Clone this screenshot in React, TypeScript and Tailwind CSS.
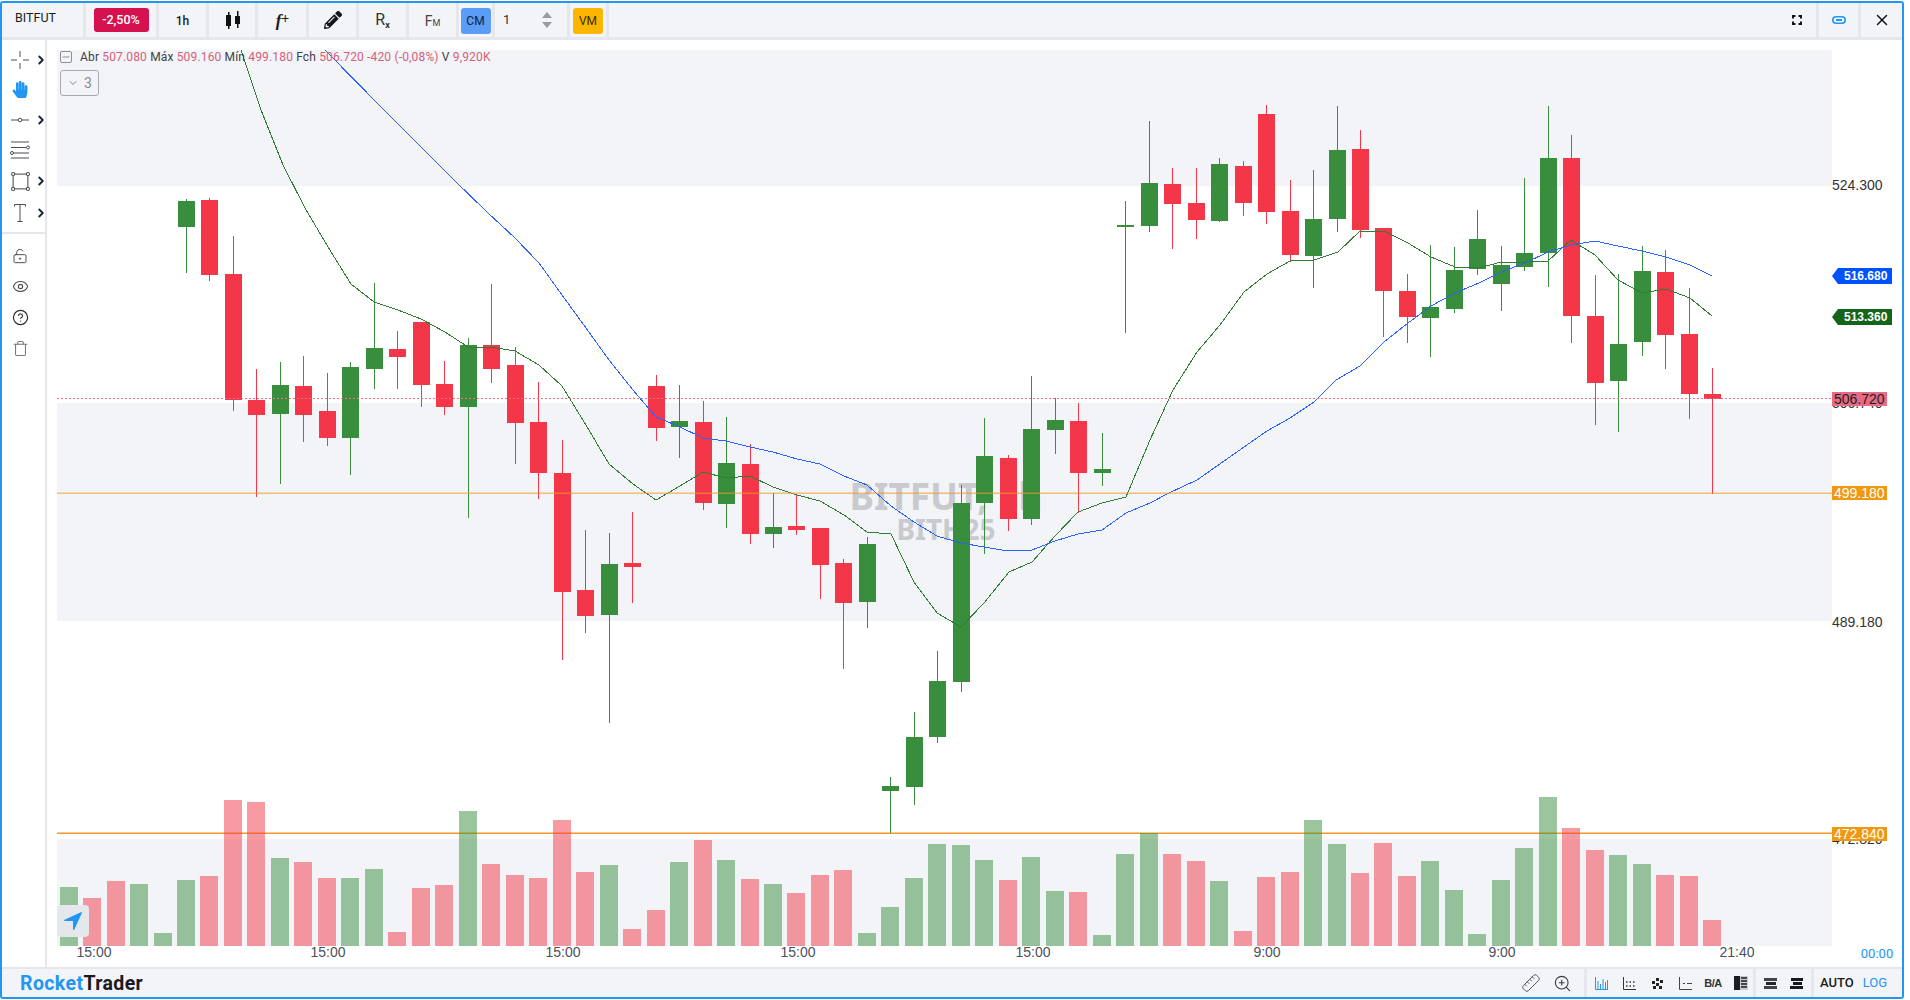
import { ChevronRight, ChevronDown, Ruler, ZoomIn, Eye, Trash, CircleHelp, LockKeyholeOpen, Minus, X } from "lucide-react";
import { FaHandPaper, FaPencilAlt } from "react-icons/fa";
import { IoNavigate } from "react-icons/io5";
import type { ReactNode } from "react";

// colour, wick top, body top, body bottom, wick bottom (candle index starts at 5)
const candles: [string, number, number, number, number][] = [
  ["g", 199, 201, 227, 273], ["r", 198, 200, 275, 281], ["r", 236, 274, 400, 411], ["r", 369, 400, 415, 497],
  ["g", 362, 385, 414, 484], ["r", 356, 386, 415, 442], ["r", 373, 411, 438, 446], ["g", 362, 367, 438, 475],
  ["g", 283, 348, 369, 389], ["r", 331, 349, 357, 389], ["r", 322, 322, 385, 407], ["r", 361, 384, 407, 415],
  ["g", 338, 345, 407, 518], ["r", 284, 345, 369, 383], ["r", 347, 365, 423, 464], ["r", 382, 422, 473, 499],
  ["r", 440, 473, 592, 660], ["r", 530, 590, 616, 633], ["g", 533, 564, 615, 723], ["r", 512, 563, 567, 603],
  ["r", 375, 386, 428, 441], ["g", 385, 421, 427, 458], ["r", 401, 422, 503, 510], ["g", 417, 463, 504, 528],
  ["r", 444, 464, 534, 544], ["g", 493, 527, 534, 548], ["r", 495, 526, 530, 535], ["r", 528, 528, 565, 599],
  ["r", 559, 563, 603, 669], ["g", 537, 544, 602, 628], ["g", 777, 786, 791, 833], ["g", 712, 737, 787, 805],
  ["g", 651, 681, 737, 743], ["g", 485, 503, 682, 692], ["g", 418, 456, 503, 554], ["r", 455, 458, 519, 531],
  ["g", 376, 429, 519, 525], ["g", 398, 420, 430, 454], ["r", 403, 421, 473, 513], ["g", 433, 469, 473, 486],
  ["g", 201, 225, 227, 333], ["g", 121, 183, 226, 232], ["r", 168, 184, 204, 249], ["r", 168, 203, 220, 239],
  ["g", 158, 164, 221, 222], ["r", 161, 166, 203, 216], ["r", 105, 114, 212, 224], ["r", 180, 211, 255, 262],
  ["g", 170, 219, 256, 288], ["g", 106, 150, 219, 232], ["r", 130, 149, 230, 238], ["r", 228, 228, 291, 337],
  ["r", 274, 291, 317, 343], ["g", 245, 307, 318, 357], ["g", 247, 270, 309, 313], ["g", 210, 239, 269, 275],
  ["g", 246, 265, 284, 311], ["g", 178, 253, 267, 271], ["g", 106, 158, 253, 287], ["r", 135, 158, 316, 343],
  ["r", 275, 316, 383, 425], ["g", 274, 344, 381, 432], ["g", 246, 271, 342, 356], ["r", 250, 272, 335, 369],
  ["r", 288, 334, 394, 419], ["r", 368, 394, 399, 494],
];

const volumes = [
  887, 898, 881, 884, 933, 880, 876, 800, 802, 858, 862, 878, 878, 869, 932, 888, 885, 811, 864, 875, 878, 820, 872, 865,
  929, 910, 862, 840, 860, 879, 884, 893, 875, 870, 933, 907, 878, 844, 845, 860, 880, 857, 891, 892, 935, 854, 833, 854,
  861, 881, 931, 877, 872, 820, 844, 873, 843, 876, 861, 890, 934, 880, 848, 797, 828, 850, 855, 864, 875, 876, 920,
];
const volColors = "grrgg" + candles.map((c) => c[0]).join("");

const greenLine =
  "241,50 261,110 283,165 305,208 328,247 351,284 374,302 398,310 421,319 445,332 468,347 491,347 515,351 539,365 562,386 586,425 609,464 633,484 656,500 680,486 703,472 726,478 750,476 773,487 797,495 820,501 844,515 867,532 891,534 914,582 937,613 961,627 984,603 1009,572 1032,562 1055,536 1078,512 1102,503 1126,497 1150,440 1173,390 1197,352 1220,325 1244,292 1267,274 1290,261 1314,260 1338,252 1360,231 1384,231 1408,243 1431,257 1455,267 1479,268 1501,262 1525,262 1548,261 1571,240 1595,255 1618,280 1642,293 1666,289 1690,298 1712,316";
const blueLine =
  "325,50 384,110 454,180 487,212 515,238 539,263 562,295 586,328 609,360 633,390 656,417 680,427 703,438 726,441 750,447 773,452 797,459 820,464 844,476 867,485 891,506 914,522 937,536 961,543 984,547 1008,551 1032,550 1055,541 1078,534 1102,530 1126,513 1150,503 1169,493 1197,480 1254,440 1267,431 1290,418 1314,402 1336,380 1360,366 1384,342 1408,323 1431,306 1455,293 1479,283 1501,272 1525,263 1548,252 1571,245 1595,241 1618,246 1642,251 1666,257 1690,265 1712,276";

const barX = (i: number) => Math.round(68.6 + 23.48 * i);

function Chart() {
  return (
    <svg viewBox="47 40 1855 927" className="absolute inset-0 w-full h-full">
      <rect x="57" y="50" width="1775" height="136" fill="#f2f4f8" />
      <rect x="57" y="403" width="1775" height="218" fill="#f2f4f8" />
      <rect x="57" y="839" width="1775" height="107" fill="#f2f4f8" />

      <text x="946" y="510" textAnchor="middle" className="font-[family-name:'Noto_Sans'] font-bold text-[37px] fill-[#c9cace]">BITFUT, 1h</text>
      <text x="946" y="540" textAnchor="middle" className="font-[family-name:'Noto_Sans'] font-bold text-[28px] fill-[#c9cace]">BITH25</text>

      <rect x="57" y="832.5" width="1775" height="1.5" fill="#f0982a" />

      {volumes.map((top, i) => (
        <rect key={i} x={barX(i) - 9} y={top} width="18" height={946 - top} fill={volColors[i] === "g" ? "#388e3c" : "#f23645"} fillOpacity="0.5" shapeRendering="crispEdges" />
      ))}

      {candles.map(([c, t, o, b, l], i) => {
        const x = barX(i + 5);
        const color = c === "g" ? "#388e3c" : "#f43748";
        return (
          <g key={i} fill={color} shapeRendering="crispEdges">
            <rect x={x} y={t} width="1" height={l - t} />
            <rect x={x - 8} y={o} width="17" height={b - o} />
          </g>
        );
      })}

      <polyline points={greenLine} fill="none" stroke="#2e7d32" strokeWidth="1" shapeRendering="crispEdges" />
      <polyline points={blueLine} fill="none" stroke="#2962ff" strokeWidth="1" shapeRendering="crispEdges" />

      <line x1="57" x2="1832" y1="398.5" y2="398.5" stroke="#f06d85" strokeWidth="1" strokeDasharray="2 2" />
      <rect x="57" y="492.5" width="1775" height="1.5" fill="#f0982a" fillOpacity="0.6" />

      <g className="font-[family-name:'Liberation_Sans'] text-[14px] fill-[#333]">
        <text x="1832" y="190">524.300</text>
        <text x="1832" y="408">506.740</text>
        <text x="1832" y="627">489.180</text>
        <text x="1832" y="844">472.820</text>
      </g>

      <polygon points="1832,276 1838,268 1892,268 1892,284 1838,284" fill="#0052ff" />
      <text x="1844" y="280" className="font-[family-name:'Liberation_Sans'] font-bold text-[12px] fill-white">516.680</text>
      <polygon points="1832,317 1838,309 1892,309 1892,325 1838,325" fill="#14641a" />
      <text x="1844" y="321" className="font-[family-name:'Liberation_Sans'] font-bold text-[12px] fill-white">513.360</text>

      <rect x="1832" y="392" width="55" height="14" fill="#e86a85" />
      <text x="1834" y="404" className="font-[family-name:'Liberation_Sans'] text-[14px] fill-[#222]">506.720</text>
      <rect x="1832" y="486" width="55" height="14" fill="#f0980f" />
      <text x="1834" y="498" className="font-[family-name:'Liberation_Sans'] text-[14px] fill-white">499.180</text>
      <rect x="1832" y="827" width="55" height="14" fill="#f0980f" />
      <text x="1834" y="839" className="font-[family-name:'Liberation_Sans'] text-[14px] fill-white">472.840</text>

      <g textAnchor="middle" className="font-[family-name:'Liberation_Sans'] text-[14px] fill-[#4d4f5c]">
        <text x="94" y="957">15:00</text>
        <text x="328" y="957">15:00</text>
        <text x="563" y="957">15:00</text>
        <text x="798" y="957">15:00</text>
        <text x="1033" y="957">15:00</text>
        <text x="1267" y="957">9:00</text>
        <text x="1502" y="957">9:00</text>
        <text x="1737" y="957">21:40</text>
      </g>
      <text x="1877" y="958" textAnchor="middle" className="font-[family-name:Roboto] text-[13px] fill-[#2196f3]">00:00</text>
    </svg>
  );
}

function Cell({ w, children, last }: { w: string; children?: ReactNode; last?: boolean }) {
  return (
    <div className={`${w} h-full flex items-center justify-center shrink-0 ${last ? "" : "border-r-[3px] border-[#e5e7ec]"}`}>
      {children}
    </div>
  );
}

function TopBar() {
  return (
    <div className="h-[37px] shrink-0 flex bg-[#f2f4f8] border-b-[3px] border-[#e5e7ec] text-[#1a1a1f]">
      <div className="w-[84px] h-full shrink-0 border-r-[3px] border-[#e5e7ec] flex items-center pl-[13px] pb-[3px] text-[12.5px]">BITFUT</div>
      <Cell w="w-[73px]">
        <span className="bg-[#d5124f] text-white rounded-[3px] w-[55px] h-[24px] flex items-center justify-center text-[12.5px] font-medium">-2,50%</span>
      </Cell>
      <Cell w="w-[50px]"><span className="text-[12px] font-medium mt-[1px]">1h</span></Cell>
      <Cell w="w-[49px]">
        <svg width="16" height="20" viewBox="0 0 16 20" fill="#111" className="ml-[1px]">
          <rect x="1" y="5" width="5" height="11" rx="0.5" />
          <rect x="3" y="2" width="1.5" height="17" />
          <rect x="10" y="6" width="5" height="8" rx="0.5" />
          <rect x="12" y="1" width="1.5" height="17" />
        </svg>
      </Cell>
      <Cell w="w-[51px]"><span className="font-[family-name:'Liberation_Serif'] italic font-bold text-[17px] leading-none ml-[1px]">f<span className="not-italic text-[14px] align-top">+</span></span></Cell>
      <Cell w="w-[50px]"><FaPencilAlt className="text-[#15161a] w-[18px] h-[18px]" /></Cell>
      <Cell w="w-[50px]"><span className="text-[16px] leading-none text-[#333] mt-[1px]">R<span className="text-[9px] font-bold align-[-3px]">x</span></span></Cell>
      <Cell w="w-[50px]"><span className="text-[14px] leading-none text-[#444] mt-[1px]">F<span className="text-[9px]">M</span></span></Cell>
      <Cell w="w-[36px]">
        <span className="bg-[#5b9cf6] rounded-[3px] w-[30px] h-[26px] mt-[1px] flex items-center justify-center text-[12px] text-[#10203a]">CM</span>
      </Cell>
      <div className="w-[75px] h-full shrink-0 border-r-[3px] border-[#e5e7ec] flex items-center justify-between pl-[8px] pr-[15px]">
        <span className="text-[13px] text-[#333]">1</span>
        <svg width="10" height="20" viewBox="0 0 10 20" fill="#9a9ca3">
          <polygon points="5,2 10,8 0,8" />
          <polygon points="0,12 10,12 5,18" />
        </svg>
      </div>
      <Cell w="w-[39px]">
        <span className="bg-[#fdb600] rounded-[3px] w-[30px] h-[26px] mt-[1px] flex items-center justify-center text-[12px] text-[#3a2a00]">VM</span>
      </Cell>
      <div className="flex-1" />
      <Cell w="w-[42px]">
        <svg width="10" height="10" viewBox="0 0 10 10" fill="none" stroke="#14161c" strokeWidth="2">
          <path d="M1 3.5V1h2.5M6.5 1H9v2.5M9 6.5V9H6.5M3.5 9H1V6.5" />
        </svg>
      </Cell>
      <Cell w="w-[42px]">
        <svg width="14" height="8" viewBox="0 0 14 8" fill="none" stroke="#2196f3" strokeWidth="1.6">
          <rect x="0.8" y="0.8" width="12.4" height="6.4" rx="3.2" />
          <path d="M4 4h6" strokeWidth="2" />
        </svg>
      </Cell>
      <Cell w="w-[41px]" last><X className="text-[#14161c] w-[18px] h-[18px]" strokeWidth={2} /></Cell>
    </div>
  );
}

function ToolRow({ h, chevron, children }: { h: string; chevron?: boolean; children: ReactNode }) {
  return (
    <div className={`${h} relative flex items-center justify-center w-full pr-[7px]`}>
      {children}
      {chevron && <ChevronRight className="absolute right-[-3px] w-[14px] h-[14px] text-[#1a2340]" strokeWidth={3.2} />}
    </div>
  );
}

function Sidebar() {
  return (
    <div className="w-[45px] shrink-0 h-full border-r-2 border-[#e5e7ec] pt-[5px] text-[#4a4d57]">
      <ToolRow h="h-[30px]" chevron>
        <svg width="18" height="18" viewBox="0 0 18 18" stroke="#4a4d57" strokeWidth="1"><path d="M0 9h6M12 9h6M9 0v6M9 12v6" /></svg>
      </ToolRow>
      <ToolRow h="h-[30px]"><FaHandPaper className="w-[16px] h-[17px] text-[#2196f3] mb-[1px]" /></ToolRow>
      <ToolRow h="h-[30px]" chevron>
        <svg width="18" height="6" viewBox="0 0 18 6" fill="none" stroke="#4a4d57"><path d="M0 3h7M11 3h7" /><circle cx="9" cy="3" r="1.8" /></svg>
      </ToolRow>
      <ToolRow h="h-[30px]">
        <svg width="20" height="18" viewBox="0 0 20 18" fill="none" stroke="#4a4d57"><path d="M1 1h18M1 6.5h15M4 12h15M1 17h18" /><circle cx="18" cy="6.5" r="1.5" /><circle cx="2" cy="12" r="1.5" /></svg>
      </ToolRow>
      <ToolRow h="h-[32px]" chevron>
        <svg width="19" height="19" viewBox="0 0 18 18" fill="#fff" stroke="#4a4d57"><rect x="2" y="2" width="14" height="14" /><circle cx="2" cy="2" r="1.5" /><circle cx="16" cy="2" r="1.5" /><circle cx="2" cy="16" r="1.5" /><circle cx="16" cy="16" r="1.5" /></svg>
      </ToolRow>
      <ToolRow h="h-[32px]" chevron>
        <svg width="12" height="18" viewBox="0 0 12 18" fill="none" stroke="#4a4d57"><path d="M.5 2.5V.5h11v2M6 .5v17M3.5 17.5h5" /></svg>
      </ToolRow>
      <div className="h-[2px] bg-[#e5e7ec] mt-[3px] mb-[6px]" />
      <ToolRow h="h-[31px]"><LockKeyholeOpen className="w-[16px] h-[16px]" strokeWidth={1.5} /></ToolRow>
      <ToolRow h="h-[31px]"><Eye className="w-[17px] h-[17px]" strokeWidth={1.5} /></ToolRow>
      <ToolRow h="h-[31px]"><CircleHelp className="w-[17px] h-[17px] text-[#2b2d33]" strokeWidth={1.7} /></ToolRow>
      <ToolRow h="h-[31px]"><Trash className="w-[17px] h-[17px] text-[#77797f]" strokeWidth={1.5} /></ToolRow>
    </div>
  );
}

function Legend() {
  const val = "text-[#d6607a]";
  return (
    <div className="absolute left-[13px] top-[11px] text-[12px] leading-[12px] text-[#3f414a]">
      <div className="flex items-center gap-[8px]">
        <span className="w-[12px] h-[12px] border border-[#8d8f96] rounded-[2px] flex items-center justify-center bg-[#f2f4f8]">
          <Minus className="w-[10px] h-[10px] text-[#777]" strokeWidth={2} />
        </span>
        <span className="whitespace-nowrap tracking-[0.16px]">
          Abr <span className={val}>507.080</span> Máx <span className={val}>509.160</span> Mín <span className={val}>499.180</span> Fch <span className={val}>506.720 -420 (-0,08%)</span> V <span className={val}>9,920K</span>
        </span>
      </div>
      <div className="mt-[7px] w-[39px] h-[26px] border border-[#a8aab0] rounded-[3px] flex items-center justify-center gap-[5px] text-[14px] text-[#85878e]">
        <ChevronDown className="w-[12px] h-[12px]" strokeWidth={2} />3
      </div>
    </div>
  );
}

function BottomIcon({ children }: { children: ReactNode }) {
  return <div className="w-[28px] h-full flex items-center justify-center shrink-0">{children}</div>;
}

function BottomBar() {
  const sep = "h-full w-[3px] bg-[#e5e7ec] shrink-0";
  return (
    <div className="h-[30px] shrink-0 flex items-center bg-[#f2f4f8] border-t-2 border-[#e5e7ec]">
      <div className="pl-[18px] pt-[1px] text-[19.5px] font-bold tracking-[0.4px] leading-none">
        <span className="text-[#2196f3]">Rocket</span><span className="text-[#1a1a20]">Trader</span>
      </div>
      <div className="flex-1" />
      <Ruler className="w-[20px] h-[20px] text-[#55575e] mr-[12px] -scale-x-100" strokeWidth={1.2} />
      <ZoomIn className="w-[19px] h-[19px] text-[#3a3c44] mr-[12px]" strokeWidth={1.4} />
      <div className={sep} />
      <div className="w-[166px] h-full flex items-center">
        <BottomIcon><svg width="13" height="13" viewBox="0 0 13 13" fill="none" stroke="#2196f3"><path d="M.5 0v12.5H13M3 12V4M5.5 12V7M8 12V2M10.5 12V5M12.5 12V3" /></svg></BottomIcon>
        <BottomIcon><svg width="13" height="13" viewBox="0 0 13 13" fill="#333" stroke="#333"><path d="M.5 0v12.5H13" fill="none" /><path strokeWidth="1.5" strokeDasharray="1.5 2" d="M3 5h10M3 9h10" /></svg></BottomIcon>
        <BottomIcon><svg width="13" height="13" viewBox="0 0 13 13" fill="#222"><rect x="1" y="4" width="3" height="3" /><rect x="5" y="1" width="3" height="3" /><rect x="9" y="3" width="3" height="3" /><rect x="5" y="6" width="3" height="3" /><rect x="2" y="9" width="3" height="3" /><rect x="8" y="9" width="3" height="3" /></svg></BottomIcon>
        <BottomIcon><svg width="13" height="13" viewBox="0 0 13 13" fill="none" stroke="#444"><path d="M.5 0v12.5H13M4 6.5h2M8 6.5h5" /></svg></BottomIcon>
        <BottomIcon><span className="font-[family-name:'Liberation_Sans'] text-[11px] font-bold text-[#333] tracking-[-0.5px]">B/A</span></BottomIcon>
        <BottomIcon><svg width="14" height="14" viewBox="0 0 14 14"><rect width="14" height="14" fill="#c9cbd0" /><rect width="6" height="14" fill="#1c1d22" /><path d="M7 2h6M7 5h6M7 8h6M7 11h6" stroke="#1c1d22" strokeWidth="1.5" /></svg></BottomIcon>
      </div>
      <div className={sep} />
      <div className="w-[55px] h-full flex items-center justify-around px-[1px]">
        <svg width="13" height="11" viewBox="0 0 13 11" fill="#24252a"><rect width="13" height="3" x="0" y="0" opacity=".85" /><rect width="10" height="3" x="2" y="4" /><rect width="13" height="3" x="0" y="8" opacity=".85" /></svg>
        <svg width="13" height="11" viewBox="0 0 13 11" fill="#17181c"><rect width="12" height="3" x="1" y="0" /><rect width="9" height="3" x="3" y="4" /><rect width="13" height="3" x="0" y="8" /></svg>
      </div>
      <div className={sep} />
      <div className="w-[88px] h-full flex items-center pl-[6px] text-[13px] font-medium">
        <span className="text-[#1a1a20]">AUTO</span>
        <span className="text-[#2196f3] ml-[9px] font-normal">LOG</span>
      </div>
    </div>
  );
}

export default function App() {
  return (
    <div className="mt-[1px] w-[1904px] h-[998px] flex flex-col border-2 border-[#2196f3] rounded-[3px] bg-white font-[family-name:Roboto] overflow-hidden">
      <TopBar />
      <div className="flex-1 flex min-h-0">
        <Sidebar />
        <div className="flex-1 relative">
          <Chart />
          <Legend />
          <button className="absolute left-[10px] bottom-[30px] w-[32px] h-[32px] rounded-[4px] bg-[#e4e7ec] flex items-center justify-center">
            <IoNavigate className="w-[22px] h-[22px] text-[#2196f3]" />
          </button>
        </div>
      </div>
      <BottomBar />
    </div>
  );
}
